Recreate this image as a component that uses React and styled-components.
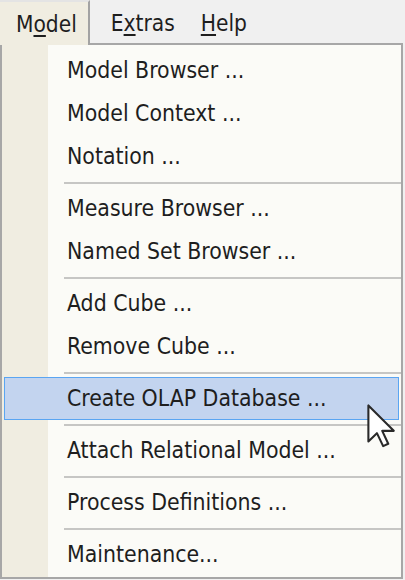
import React from "react";
import styled, { createGlobalStyle } from "styled-components";

const Global = createGlobalStyle`
  html, body { margin: 0; padding: 0; background: #f0f0f0; }
  body {
    font-family: "DejaVu Sans Condensed", "DejaVu Sans", sans-serif;
    font-stretch: condensed;
    color: #1e1e1e;
  }
`;

const Root = styled.div`
  width: 405px;
  height: 580px;
  position: relative;
  overflow: hidden;
  background: #f0f0f0;
`;

const MenuBar = styled.div`
  display: flex;
  align-items: stretch;
  height: 43px;
  background: #f0f0f0;
`;

const MenuTitle = styled.div`
  display: flex;
  align-items: center;
  box-sizing: border-box;
  padding-left: ${(p) => p.$left}px;
  padding-right: ${(p) => p.$right}px;
  padding-top: 3px;
  font-size: 22.5px;
  line-height: 1;
  position: relative;
  z-index: 1;
  ${(p) =>
    p.$active &&
    `
    background: #f0ede1;
    border-top: 2px solid #e4e4e4;
    border-right: 2px solid #a3a3a3;
    height: 45px;
    margin-bottom: -2px;
    padding-bottom: 2px;
  `}
`;

const Mnemonic = styled.span`
  text-decoration: underline;
  text-underline-offset: 3px;
  text-decoration-thickness: 1.5px;
`;

const Dropdown = styled.div`
  box-sizing: border-box;
  width: 403px;
  border: 2px solid #a7a7a7;
  background: #fbfbf7;
  padding: 4px 0 1px;
  position: relative;
`;

const Gutter = styled.div`
  position: absolute;
  left: 0;
  top: 0;
  bottom: 0;
  width: 46px;
  background: #f0ede1;
`;

const Item = styled.div`
  position: relative;
  box-sizing: border-box;
  height: 43px;
  margin: 0 2px;
  display: flex;
  align-items: center;
  padding-left: 62px;
  font-size: 22.8px;
  line-height: 1;
  white-space: nowrap;
  border: 1px solid ${(p) => (p.$hover ? "#5aa5f2" : "transparent")};
  background: ${(p) => (p.$hover ? "#c3d4ef" : "transparent")};
`;

const Separator = styled.div`
  position: relative;
  height: 9px;
  display: flex;
  align-items: center;
  padding-left: 62px;
  &::after {
    content: "";
    flex: 1;
    height: 2px;
    background: #c6c6c4;
  }
`;

const Cursor = styled.svg`
  position: absolute;
  left: 367px;
  top: 404px;
  z-index: 5;
`;

const items = [
  { label: "Model Browser ..." },
  { label: "Model Context ..." },
  { label: "Notation ...", sep: true },
  { label: "Measure Browser ..." },
  { label: "Named Set Browser ...", sep: true },
  { label: "Add Cube ..." },
  { label: "Remove Cube ...", sep: true },
  { label: "Create OLAP Database ...", hover: true, sep: true },
  { label: "Attach Relational Model ...", sep: true },
  { label: "Process Definitions ...", sep: true },
  { label: "Maintenance..." },
];

export default function App() {
  return (
    <Root>
      <Global />
      <MenuBar>
        <MenuTitle $active $left={16} $right={11}>
          M<Mnemonic>o</Mnemonic>del
        </MenuTitle>
        <MenuTitle $left={21} $right={16}>
          E<Mnemonic>x</Mnemonic>tras
        </MenuTitle>
        <MenuTitle $left={10} $right={16}>
          <Mnemonic>H</Mnemonic>elp
        </MenuTitle>
      </MenuBar>
      <Dropdown>
        <Gutter />
        {items.map((it) => (
          <React.Fragment key={it.label}>
            <Item $hover={it.hover}>{it.label}</Item>
            {it.sep && <Separator />}
          </React.Fragment>
        ))}
      </Dropdown>
      <Cursor width="30" height="44" viewBox="0 0 13 19">
        <path
          d="M0.6 0.6 L0.6 16.2 L4.3 12.6 L7 18.2 L9.2 17.2 L6.6 11.6 L11.6 11.6 Z"
          fill="#ffffff"
          stroke="#2a2a2a"
          strokeWidth="0.9"
          strokeLinejoin="round"
        />
      </Cursor>
    </Root>
  );
}
